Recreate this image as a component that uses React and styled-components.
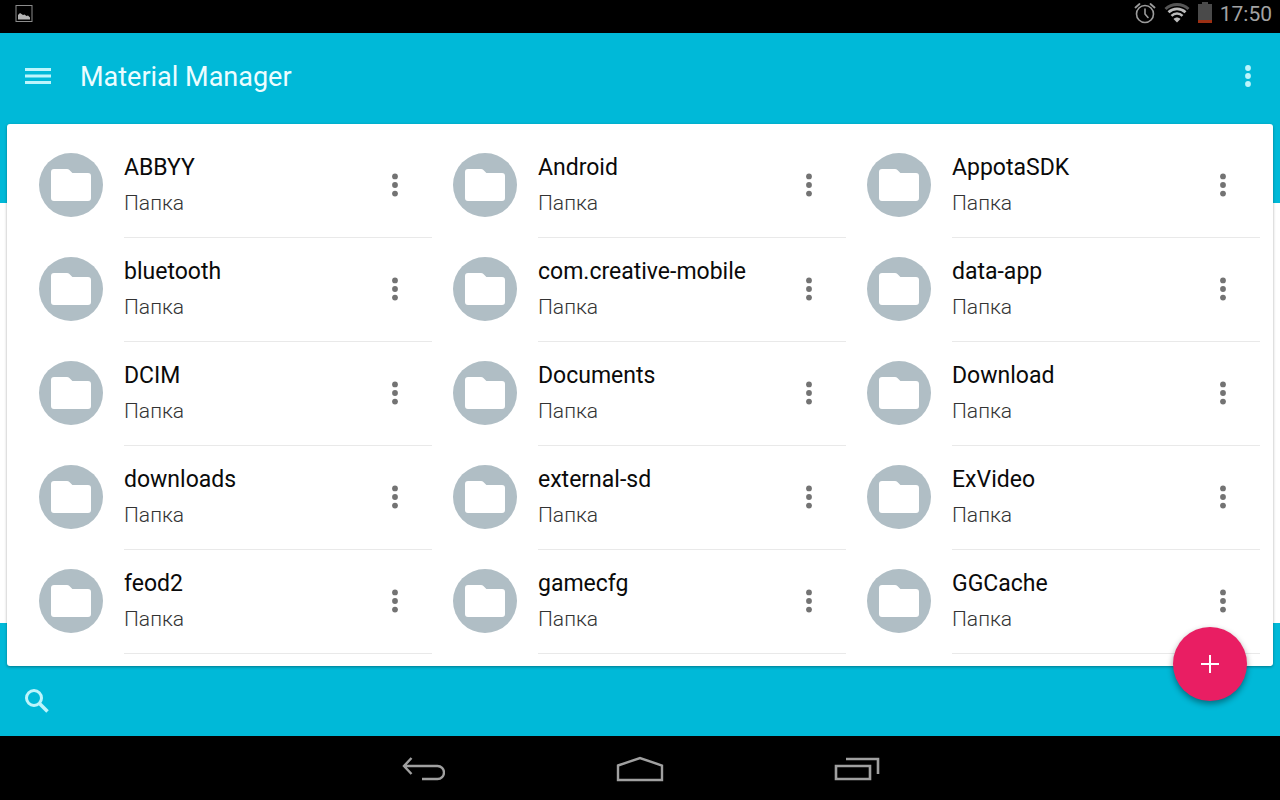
import React from 'react';
import styled, { createGlobalStyle } from 'styled-components';

const GlobalStyle = createGlobalStyle`
  *, *::before, *::after { box-sizing: border-box; }
  body {
    margin: 0;
    background: #000;
    font-family: Roboto, "Noto Sans", sans-serif;
  }
`;

const Screen = styled.div`
  display: flex;
  flex-direction: column;
  min-height: 100vh;
`;

const StatusBar = styled.div`
  display: flex;
  align-items: center;
  justify-content: space-between;
  height: 33px;
  padding: 0 8px 6px 14px;
  background: #000;
  color: #a3a3a3;
`;

const StatusIcons = styled.div`
  display: flex;
  align-items: center;
  gap: 8px;
  svg { display: block; }
`;

const Clock = styled.time`
  font-size: 21px;
  line-height: 26px;
`;

const Main = styled.main`
  position: relative;
  flex: 1;
  display: flex;
  flex-direction: column;
  background: linear-gradient(
    #00b9d8 170px,
    #fff 170px,
    #fff calc(100% - 113px),
    #00b9d8 calc(100% - 113px)
  );
`;

const AppBar = styled.header`
  display: flex;
  align-items: center;
  height: 91px;
  padding: 0 12px 6px 18px;
`;

const IconButton = styled.button`
  display: flex;
  align-items: center;
  justify-content: center;
  flex: none;
  width: 40px;
  height: 40px;
  padding: 0;
  border: 0;
  background: none;
  color: ${(p) => p.$color || '#bdf5fc'};
  cursor: pointer;
`;

const Title = styled.h1`
  flex: 1;
  margin: 0 0 0 22px;
  padding-top: 2px;
  color: #ecfdff;
  font-size: 27px;
  line-height: 32px;
  font-weight: 400;
`;

const Card = styled.section`
  flex: 1;
  margin: 0 7px;
  padding: 10px 13px 12px 11px;
  border-radius: 3px;
  background: #fff;
  box-shadow: 0 1px 3px rgba(0, 0, 0, 0.35);
`;

const FolderGrid = styled.ul`
  display: grid;
  grid-template-columns: repeat(3, minmax(0, 1fr));
  margin: 0;
  padding: 0;
  list-style: none;
`;

const FolderItem = styled.li`
  display: flex;
  gap: 21px;
  height: 104px;
  padding-left: 21px;
`;

const Avatar = styled.span`
  display: flex;
  align-items: center;
  justify-content: center;
  flex: none;
  width: 64px;
  height: 64px;
  margin-top: 19px;
  border-radius: 50%;
  background: #b0bec5;
`;

const FolderBody = styled.div`
  flex: 1;
  min-width: 0;
  display: flex;
  align-items: center;
  padding: 0 17px 2px 0;
  border-bottom: 1px solid #e9e9e9;
`;

const FolderText = styled.div`
  flex: 1;
  min-width: 0;
`;

const FolderName = styled.div`
  overflow: hidden;
  text-overflow: ellipsis;
  white-space: nowrap;
  color: #0a0a0a;
  font-size: 23px;
  line-height: 36px;
`;

const FolderKind = styled.div`
  color: #333;
  font-size: 21px;
  line-height: 34px;
  font-weight: 300;
`;

const BottomBar = styled.footer`
  display: flex;
  align-items: center;
  height: 70px;
  padding: 0 17px;
`;

const AddButton = styled.button`
  position: absolute;
  right: 33px;
  bottom: 35px;
  display: flex;
  align-items: center;
  justify-content: center;
  width: 74px;
  height: 74px;
  padding: 0;
  border: 0;
  border-radius: 50%;
  background: #e91e63;
  color: #fff;
  box-shadow: 0 3px 6px rgba(0, 0, 0, 0.4);
  cursor: pointer;
`;

const NavBar = styled.nav`
  display: flex;
  align-items: center;
  justify-content: center;
  gap: 153px;
  height: 64px;
  padding-top: 2px;
  background: #000;
`;

const NavButton = styled.button`
  display: flex;
  align-items: center;
  justify-content: center;
  width: 64px;
  height: 48px;
  padding: 0;
  border: 0;
  background: none;
  color: #a0a0a0;
  cursor: pointer;
`;

const PictureIcon = () => (
  <svg width="20" height="20" viewBox="0 0 20 20" aria-hidden="true">
    <rect x="2" y="1.500" width="16" height="16" fill="none" stroke="#8c8c8c" />
    <path d="M4 15.500V11l2-2 3 2 1.500-.500 2 1.500 1.500-.500 2 2v2z" fill="#b5b5b5" />
  </svg>
);

const AlarmIcon = () => (
  <svg width="22" height="22" viewBox="0 0 22 22" fill="none" stroke="#9c9c9c" strokeWidth="1.600" strokeLinecap="round" aria-hidden="true">
    <circle cx="11" cy="11" r="8.500" />
    <path d="M11 6v5l3 3.500" />
    <path d="M1.500 4.500 5.500 1M20.500 4.500 16.500 1" strokeWidth="1.800" />
  </svg>
);

const WifiIcon = () => (
  <svg width="26" height="22" viewBox="0 0 26 22" fill="none" aria-hidden="true">
    <path d="M1.500 6C8 0 18 0 24.500 6" stroke="#555" strokeWidth="3" />
    <path d="M4.500 9.300C9.500 4.800 16.500 4.800 21.500 9.300" stroke="#bcbcbc" strokeWidth="2.800" />
    <path d="M7.500 12.800C10.500 9.800 15.500 9.800 18.500 12.800" stroke="#bcbcbc" strokeWidth="2.600" />
    <path d="M9.500 16C11.500 14 14.500 14 16.500 16L13 19.500z" fill="#bcbcbc" />
  </svg>
);

const BatteryIcon = () => (
  <svg width="14" height="24" viewBox="0 0 14 24" aria-hidden="true">
    <path d="M4 0h6v2h4v17H0V2h4z" fill="#4a4a4a" />
    <path d="M0 18h14v3H0z" fill="#9c3014" />
  </svg>
);

const MenuIcon = () => (
  <svg width="28" height="18" viewBox="0 0 28 18" aria-hidden="true">
    <path d="M1 1h26v3H1zM1 7.500h26v3H1zM1 14h26v3H1z" fill="currentColor" />
  </svg>
);

const DotsIcon = ({ gap = 8.6, radius = 2.9 }) => (
  <svg width="8" height="26" viewBox="0 0 8 26" fill="currentColor" aria-hidden="true">
    <circle cx="4" cy={13 - gap} r={radius} />
    <circle cx="4" cy="13" r={radius} />
    <circle cx="4" cy={13 + gap} r={radius} />
  </svg>
);

const FolderIcon = () => (
  <svg width="40" height="32" viewBox="0 0 40 32" aria-hidden="true">
    <path d="M3 0h13c1 0 1.700.300 2.400 1l3 3H37a3 3 0 0 1 3 3v22a3 3 0 0 1-3 3H3a3 3 0 0 1-3-3V3a3 3 0 0 1 3-3z" fill="#fff" />
  </svg>
);

const SearchIcon = () => (
  <svg width="24" height="24" viewBox="0 0 24 24" fill="none" stroke="currentColor" aria-hidden="true">
    <circle cx="9" cy="9" r="7.500" strokeWidth="3" />
    <path d="m14.500 14.500 8 8" strokeWidth="3.600" />
  </svg>
);

const PlusIcon = () => (
  <svg width="18" height="18" viewBox="0 0 18 18" aria-hidden="true">
    <path d="M8 0h2v8h8v2h-8v8H8v-8H0V8h8z" fill="currentColor" />
  </svg>
);

const BackIcon = () => (
  <svg width="44" height="26" viewBox="0 0 44 26" fill="none" stroke="currentColor" strokeWidth="2.400" aria-hidden="true">
    <path d="M10.500 2 3 10l7.500 8M3 10h33.500a6.500 6.500 0 0 1 0 13H21" />
  </svg>
);

const HomeIcon = () => (
  <svg width="48" height="26" viewBox="0 0 48 26" fill="none" stroke="currentColor" strokeWidth="2.400" aria-hidden="true">
    <path d="M2 9.500 24 2l22 7.500V24H2z" />
  </svg>
);

const RecentIcon = () => (
  <svg width="46" height="26" viewBox="0 0 46 26" fill="none" stroke="currentColor" strokeWidth="2.600" aria-hidden="true">
    <path d="M2 10h34v13H2zM12 3h32v15" />
  </svg>
);

const folders = [
  'ABBYY', 'Android', 'AppotaSDK',
  'bluetooth', 'com.creative-mobile', 'data-app',
  'DCIM', 'Documents', 'Download',
  'downloads', 'external-sd', 'ExVideo',
  'feod2', 'gamecfg', 'GGCache',
];

const Folder = ({ name }) => (
  <FolderItem>
    <Avatar><FolderIcon /></Avatar>
    <FolderBody>
      <FolderText>
        <FolderName>{name}</FolderName>
        <FolderKind>Папка</FolderKind>
      </FolderText>
      <IconButton $color="#737373" aria-label={`Меню: ${name}`}>
        <DotsIcon />
      </IconButton>
    </FolderBody>
  </FolderItem>
);

export default function App() {
  return (
    <Screen>
      <GlobalStyle />
      <StatusBar>
        <StatusIcons><PictureIcon /></StatusIcons>
        <StatusIcons>
          <AlarmIcon />
          <WifiIcon />
          <BatteryIcon />
          <Clock>17:50</Clock>
        </StatusIcons>
      </StatusBar>
      <Main>
        <AppBar>
          <IconButton aria-label="Навигация"><MenuIcon /></IconButton>
          <Title>Material Manager</Title>
          <IconButton aria-label="Ещё"><DotsIcon gap={8} /></IconButton>
        </AppBar>
        <Card>
          <FolderGrid>
            {folders.map((name) => <Folder key={name} name={name} />)}
          </FolderGrid>
        </Card>
        <BottomBar>
          <IconButton aria-label="Поиск"><SearchIcon /></IconButton>
        </BottomBar>
        <AddButton aria-label="Добавить"><PlusIcon /></AddButton>
      </Main>
      <NavBar>
        <NavButton aria-label="Назад"><BackIcon /></NavButton>
        <NavButton aria-label="Домой"><HomeIcon /></NavButton>
        <NavButton aria-label="Недавние"><RecentIcon /></NavButton>
      </NavBar>
    </Screen>
  );
}
